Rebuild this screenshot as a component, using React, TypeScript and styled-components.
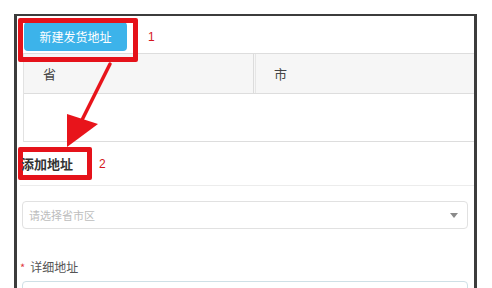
import React from "react";
import styled, { createGlobalStyle } from "styled-components";

const Global = createGlobalStyle`
  html, body { margin: 0; padding: 0; background: #ffffff; }
  body { font-family: "Noto Sans CJK SC", "Noto Sans", sans-serif; overflow: hidden; }
  * { box-sizing: border-box; }
`;

const Page = styled.div`
  position: relative;
  width: 492px;
  height: 288px;
  padding: 14px 0 0 14px;
  overflow: hidden;
`;

const Frame = styled.div`
  width: 463px;
  height: 274px;
  border-top: 2px solid #3c3c3c;
  border-left: 3px solid #3c3c3c;
  border-right: 3px solid #3c3c3c;
  display: flex;
  flex-direction: column;
  & > * { flex-shrink: 0; }
`;

const Toolbar = styled.div`
  display: flex;
  align-items: center;
  padding: 6px 0 2px 7px;
  height: 37px;
`;

const Marked = styled.div<{ $l: number; $t: number; $r: number; $b: number; $under?: boolean }>`
  position: relative;
  display: flex;
  align-items: center;
  isolation: isolate;
  &::after {
    content: "";
    position: absolute;
    left: ${(p) => -p.$l}px;
    top: ${(p) => -p.$t}px;
    right: ${(p) => -p.$r}px;
    bottom: ${(p) => -p.$b}px;
    border: 5px solid #e5121a;
    border-radius: 2px;
    pointer-events: none;
    z-index: ${(p) => (p.$under ? -1 : 1)};
  }
`;

const PrimaryButton = styled.button`
  width: 103px;
  height: 29px;
  border: none;
  border-radius: 4px;
  background: #3cb3ea;
  color: #ffffff;
  font-family: inherit;
  font-size: 12px;
  padding: 0;
`;

const StepNo = styled.span<{ $ml: number }>`
  margin-left: ${(p) => p.$ml}px;
  color: #d4161d;
  font-family: "Liberation Sans", Arial, sans-serif;
  font-size: 12px;
`;

const Table = styled.div`
  margin-left: 6px;
  border-left: 1px solid #e2e2e2;
  display: flex;
  flex-direction: column;
`;

const HeadRow = styled.div`
  display: grid;
  grid-template-columns: 229px 3px 1fr;
  height: 41px;
  background: #f6f6f6;
  border-top: 1px solid #dddddd;
  border-bottom: 1px solid #dddddd;
`;

const HeadCell = styled.div<{ $pl: number }>`
  display: flex;
  align-items: center;
  padding-left: ${(p) => p.$pl}px;
  font-size: 13px;
  color: #444;
`;

const ColDivider = styled.div`
  border-left: 1px solid #dcdcdc;
  border-right: 1px solid #e6e6e6;
`;

const BodyRow = styled.div`
  height: 48px;
  border-bottom: 1px solid #dddddd;
`;

const TitleRow = styled.div`
  display: flex;
  align-items: center;
  height: 44px;
  padding-left: 1px;
  border-bottom: 1px solid #ececec;
  margin-left: 3px;
`;

const Title = styled.span`
  font-size: 13px;
  font-weight: bold;
  color: #333;
  width: 70px;
`;

const Form = styled.div`
  display: flex;
  flex-direction: column;
  padding: 15px 6px 0 5px;
`;

const Select = styled.div`
  height: 28px;
  border: 1px solid #e1e1e1;
  border-radius: 4px;
  display: flex;
  align-items: center;
  justify-content: space-between;
  padding: 0 9px 0 6px;
  font-size: 11px;
  color: #bdbdbd;
`;

const Caret = styled.span`
  width: 0;
  height: 0;
  border-left: 4px solid transparent;
  border-right: 4px solid transparent;
  border-top: 5px solid #8a8a8a;
`;

const Label = styled.div`
  margin-top: 29px;
  display: flex;
  align-items: center;
  font-size: 12px;
  color: #555;
  margin-left: -2px;
`;

const Required = styled.span`
  color: #e0393e;
  font-size: 11px;
  margin-right: 5px;
`;

const Input = styled.div`
  margin-top: 6px;
  height: 30px;
  border: 1px solid #cfe0e6;
  border-radius: 4px;
`;

const Overlay = styled.svg`
  position: absolute;
  left: 0;
  top: 0;
  pointer-events: none;
  z-index: 2;
`;

export default function App() {
  return (
    <>
      <Global />
      <Page>
        <Frame>
          <Toolbar>
            <Marked $l={6} $t={4} $r={11} $b={11}>
              <PrimaryButton>新建发货地址</PrimaryButton>
            </Marked>
            <StepNo $ml={21}>1</StepNo>
          </Toolbar>
          <Table>
            <HeadRow>
              <HeadCell $pl={19}>省</HeadCell>
              <ColDivider />
              <HeadCell $pl={18}>市</HeadCell>
            </HeadRow>
            <BodyRow />
          </Table>
          <TitleRow>
            <Marked $l={3} $t={7} $r={1} $b={7} $under>
              <Title>添加地址</Title>
            </Marked>
            <StepNo $ml={8}>2</StepNo>
          </TitleRow>
          <Form>
            <Select>
              <span>请选择省市区</span>
              <Caret />
            </Select>
            <Label>
              <Required>*</Required>
              详细地址
            </Label>
            <Input />
          </Form>
        </Frame>
        <Overlay width="492" height="288" viewBox="0 0 492 288">
          <line x1="110" y1="64" x2="80" y2="124" stroke="#e8141b" strokeWidth="3.5" strokeLinecap="round" />
          <polygon points="67,114 98,124 67,147" fill="#e8141b" />
        </Overlay>
      </Page>
    </>
  );
}
